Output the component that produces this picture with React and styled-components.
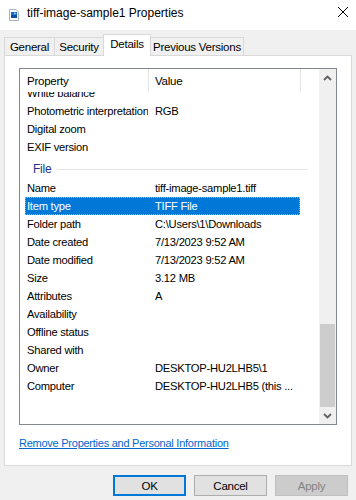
import React from 'react';
import styled, { createGlobalStyle } from 'styled-components';

const GlobalStyle = createGlobalStyle`
  body {
    margin: 0;
    font-family: "Liberation Sans", Arial, sans-serif;
    font-size: 11px;
    letter-spacing: -0.25px;
    color: #000;
  }
`;

const Window = styled.div`
  width: 356px;
  height: 500px;
  background: #f0f0f0;
  display: flex;
  flex-direction: column;
  overflow: hidden;
`;

const TitleBar = styled.div`
  height: 30px;
  background: #fff;
  display: flex;
  align-items: center;
  padding-left: 9px;
  box-sizing: border-box;
`;

const Title = styled.span`
  font-size: 12px;
  letter-spacing: 0;
  margin-left: 8px;
  flex: 1;
  padding-bottom: 5px;
`;

const CloseBtn = styled.div`
  width: 46px;
  height: 30px;
  display: flex;
  align-items: center;
  justify-content: center;
  margin-right: -10px;
  padding-bottom: 6px;
  box-sizing: border-box;
`;

const Body = styled.div`
  padding: 4px 4px 0 4px;
  display: flex;
  flex-direction: column;
`;

const TabStrip = styled.div`
  display: flex;
  align-items: flex-end;
  height: 21px;
`;

const Tab = styled.div`
  box-sizing: border-box;
  width: ${p => p.$w}px;
  height: ${p => (p.$active ? 22 : 18)}px;
  margin-left: ${p => (p.$first ? 0 : -1)}px;
  margin-bottom: ${p => (p.$active ? -1 : 0)}px;
  border: 1px solid #d9d9d9;
  border-bottom: none;
  background: ${p => (p.$active ? '#fff' : '#f0f0f0')};
  position: relative;
  z-index: ${p => (p.$active ? 2 : 1)};
  display: flex;
  align-items: center;
  justify-content: center;
  white-space: nowrap;
  font-size: 11.5px;
  padding-bottom: ${p => (p.$active ? 3 : 0)}px;
`;

const Panel = styled.div`
  box-sizing: border-box;
  width: 348px;
  height: 411px;
  border: 1px solid #d9d9d9;
  background: #fff;
  padding: 12px 0 0 14px;
  display: flex;
  flex-direction: column;
`;

const List = styled.div`
  box-sizing: border-box;
  width: 318px;
  height: 357px;
  border: 1px solid #828790;
  display: flex;
`;

const ListMain = styled.div`
  flex: 1;
  display: flex;
  flex-direction: column;
  overflow: hidden;
`;

const Header = styled.div`
  height: 23px;
  display: flex;
  flex-shrink: 0;
  position: relative;
  z-index: 1;
  background: #fff;
`;

const HeaderCell = styled.div`
  box-sizing: border-box;
  width: ${p => p.$w}px;
  border-right: 1px solid #e5e5e5;
  padding-left: ${p => p.$pad}px;
  display: flex;
  align-items: center;
  font-size: 11.5px;
`;

const Rows = styled.div`
  flex: 1;
  overflow: hidden;
`;

const RowsInner = styled.div`
  margin-top: -8px;
`;

const Row = styled.div`
  box-sizing: border-box;
  margin-left: 5px;
  width: 275px;
  height: 18px;
  display: grid;
  grid-template-columns: 123px 1fr;
  align-items: center;
  font-size: 11.2px;
  background: ${p => (p.$selected ? '#0078d7' : 'transparent')};
  color: ${p => (p.$selected ? '#fff' : '#000')};
  outline: ${p => (p.$selected ? '1px dotted #f7a13a' : 'none')};
  outline-offset: -1px;
  white-space: nowrap;
`;

const Cell = styled.span`
  padding-left: ${p => p.$pad}px;
  overflow: hidden;
`;

const Group = styled.div`
  height: 23px;
  box-sizing: border-box;
  padding: 4px 0 0 13px;
  display: flex;
  align-items: center;
  width: 288px;
`;

const GroupLabel = styled.span`
  color: #1e3287;
  font-size: 12px;
  line-height: 17px;
  margin-right: 6px;
`;

const GroupLine = styled.div`
  flex: 1;
  height: 1px;
  background: #e2e5ee;
`;

const ScrollBar = styled.div`
  width: 17px;
  background: #f0f0f0;
  display: flex;
  flex-direction: column;
`;

const ScrollArrow = styled.div`
  height: 17px;
  display: flex;
  align-items: center;
  justify-content: center;
`;

const ScrollSpace = styled.div`
  flex: ${p => p.$grow};
`;

const ScrollThumb = styled.div`
  flex: ${p => p.$grow};
  background: #cdcdcd;
  margin: 0 1px;
`;

const LinkText = styled.a`
  margin-top: 11px;
  font-size: 11px;
  color: #0066cc;
  text-decoration: underline;
  line-height: 15px;
  align-self: flex-start;
  cursor: pointer;
`;

const Footer = styled.div`
  display: flex;
  justify-content: flex-end;
  gap: 8px;
  padding: 9px 4px 0 0;
`;

const Button = styled.button`
  box-sizing: border-box;
  width: 73px;
  height: 21px;
  font-family: inherit;
  letter-spacing: inherit;
  font-size: 11.5px;
  padding: 0;
  background: ${p => (p.$disabled ? '#cccccc' : '#e1e1e1')};
  color: ${p => (p.$disabled ? '#838383' : '#000')};
  border: ${p =>
    p.$default ? '2px solid #0078d7' : p.$disabled ? '1px solid #bfbfbf' : '1px solid #adadad'};
`;

const FileIcon = () => (
  <svg width="10" height="12" viewBox="0 0 10 12">
    <path d="M0.5 0.5 H7 L9.5 3 V11.5 H0.5 Z" fill="#fff" stroke="#a9b4c2" />
    <rect x="2" y="3" width="6" height="6" fill="#1e6fc8" />
    <rect x="2" y="6" width="6" height="3" fill="#0d4ea0" />
    <circle cx="6" cy="4.5" r="0.9" fill="#8fd0ff" />
  </svg>
);

const CloseIcon = () => (
  <svg width="10" height="10" viewBox="0 0 10 10">
    <path d="M0 0 L10 10 M10 0 L0 10" stroke="#000" strokeWidth="1" />
  </svg>
);

const Chevron = ({ down }) => (
  <svg width="9" height="6" viewBox="0 0 9 6">
    <path
      d={down ? 'M1 1 L4.5 4.5 L8 1' : 'M1 5 L4.5 1.5 L8 5'}
      stroke="#606060"
      strokeWidth="1.8"
      fill="none"
    />
  </svg>
);

const tabs = [
  { label: 'General', w: 51 },
  { label: 'Security', w: 50 },
  { label: 'Details', w: 48, active: true },
  { label: 'Previous Versions', w: 94 },
];

const before = [
  ['White balance', ''],
  ['Photometric interpretation', 'RGB'],
  ['Digital zoom', ''],
  ['EXIF version', ''],
];

const fileProps = [
  ['Name', 'tiff-image-sample1.tiff'],
  ['Item type', 'TIFF File', true],
  ['Folder path', 'C:\\Users\\1\\Downloads'],
  ['Date created', '7/13/2023 9:52 AM'],
  ['Date modified', '7/13/2023 9:52 AM'],
  ['Size', '3.12 MB'],
  ['Attributes', 'A'],
  ['Availability', ''],
  ['Offline status', ''],
  ['Shared with', ''],
  ['Owner', 'DESKTOP-HU2LHB5\\1'],
  ['Computer', 'DESKTOP-HU2LHB5 (this ...'],
];

function PropRow({ name, value, selected }) {
  return (
    <Row $selected={selected}>
      <Cell $pad={2}>{name}</Cell>
      <Cell $pad={7}>{value}</Cell>
    </Row>
  );
}

export default function App() {
  return (
    <>
      <GlobalStyle />
      <Window>
        <TitleBar>
          <FileIcon />
          <Title>tiff-image-sample1 Properties</Title>
          <CloseBtn>
            <CloseIcon />
          </CloseBtn>
        </TitleBar>
        <Body>
          <TabStrip>
            {tabs.map((t, i) => (
              <Tab key={t.label} $w={t.w} $active={t.active} $first={i === 0}>
                {t.label}
              </Tab>
            ))}
          </TabStrip>
          <Panel>
            <List>
              <ListMain>
                <Header>
                  <HeaderCell $w={129} $pad={7}>Property</HeaderCell>
                  <HeaderCell $w={152} $pad={6}>Value</HeaderCell>
                </Header>
                <Rows>
                  <RowsInner>
                    {before.map(([n, v]) => (
                      <PropRow key={n} name={n} value={v} />
                    ))}
                    <Group>
                      <GroupLabel>File</GroupLabel>
                      <GroupLine />
                    </Group>
                    {fileProps.map(([n, v, s]) => (
                      <PropRow key={n} name={n} value={v} selected={s} />
                    ))}
                  </RowsInner>
                </Rows>
              </ListMain>
              <ScrollBar>
                <ScrollArrow>
                  <Chevron />
                </ScrollArrow>
                <ScrollSpace $grow={237} />
                <ScrollThumb $grow={82} />
                <ScrollArrow>
                  <Chevron down />
                </ScrollArrow>
              </ScrollBar>
            </List>
            <LinkText>Remove Properties and Personal Information</LinkText>
          </Panel>
          <Footer>
            <Button $default>OK</Button>
            <Button>Cancel</Button>
            <Button $disabled>Apply</Button>
          </Footer>
        </Body>
      </Window>
    </>
  );
}
